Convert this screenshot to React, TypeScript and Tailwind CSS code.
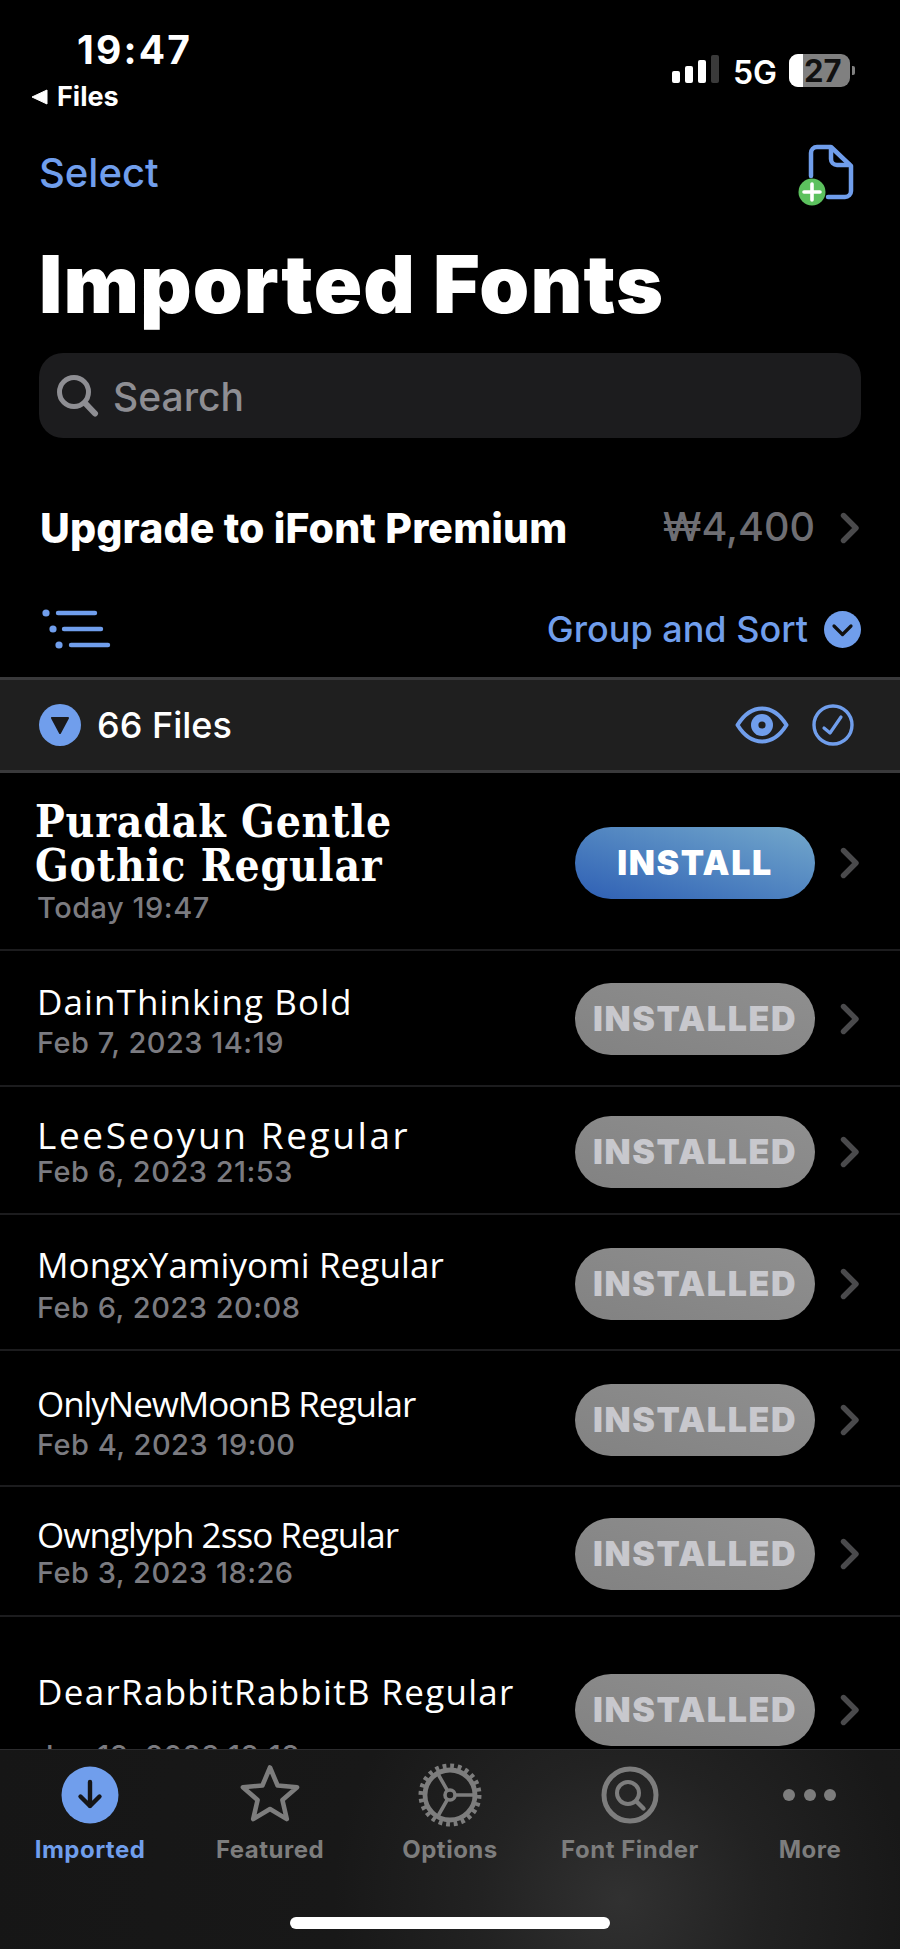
import React from 'react';

const BLUE = '#709eec';
const TAB_GREY = '#7d7d7d';

interface FontRow {
  title: string;
  date: string;
  rowClass: string;
  textClass: string;
  titleClass: string;
  dateClass: string;
  btnClass: string;
}

const rows: FontRow[] = [
  { title: 'DainThinking Bold', date: 'Feb 7, 2023 14:19', rowClass: 'h-[136px]', textClass: 'pt-[33px]', titleClass: 'text-[35px] tracking-[1.1px]', dateClass: 'mt-[9px]', btnClass: 'mt-[32px]' },
  { title: 'LeeSeoyun Regular', date: 'Feb 6, 2023 21:53', rowClass: 'h-[128px]', textClass: 'pt-[30px]', titleClass: 'text-[37px] tracking-[2.6px]', dateClass: 'mt-[5px]', btnClass: 'mt-[29px]' },
  { title: 'MongxYamiyomi Regular', date: 'Feb 6, 2023 20:08', rowClass: 'h-[136px]', textClass: 'pt-[32px]', titleClass: 'text-[35px] tracking-[0.1px]', dateClass: 'mt-[11px]', btnClass: 'mt-[33px]' },
  { title: 'OnlyNewMoonB Regular', date: 'Feb 4, 2023 19:00', rowClass: 'h-[136px]', textClass: 'pt-[35px]', titleClass: 'text-[35px] tracking-[-1.05px]', dateClass: 'mt-[9px]', btnClass: 'mt-[33px]' },
  { title: 'Ownglyph 2sso Regular', date: 'Feb 3, 2023 18:26', rowClass: 'h-[130px]', textClass: 'pt-[30px]', titleClass: 'text-[35px] tracking-[-0.95px]', dateClass: 'mt-[6px]', btnClass: 'mt-[31px]' },
  { title: 'DearRabbitRabbitB Regular', date: 'Jan 18, 2023 18:18', rowClass: 'h-[180px]', textClass: 'pt-[57px]', titleClass: 'text-[35px] tracking-[1.3px]', dateClass: 'mt-[32px]', btnClass: 'mt-[57px]' },
];

const Chevron = ({ color = '#4a4a4c' }: { color?: string }) => (
  <svg width="20" height="32" viewBox="0 0 20 32" fill="none">
    <polyline points="3.5,3.5 16,16 3.5,28.5" stroke={color} strokeWidth="5.4" strokeLinecap="round" strokeLinejoin="round" />
  </svg>
);

const StatusBar = () => (
  <div className="flex justify-between h-[130px]">
    <div className="pl-[30px] pt-[30px]">
      <div className="pl-[47px] text-[39px] leading-none font-bold tracking-[2.2px] text-white">19:47</div>
      <div className="mt-[14px] flex items-center gap-[9px] text-[27px] leading-none font-bold text-white">
        <svg width="18" height="16" viewBox="0 0 18 16"><path d="M17 1 V15 L2 8 Z" fill="#fff" stroke="#fff" strokeWidth="1" strokeLinejoin="round" /></svg>
        <span>Files</span>
      </div>
    </div>
    <div className="flex items-start pt-[54px] pr-[45px]">
      <div className="flex items-end gap-[5px] h-[31px] pb-[2px]">
        <div className="w-[8px] h-[12px] rounded-[2px] bg-white" />
        <div className="w-[8px] h-[17px] rounded-[2px] bg-white" />
        <div className="w-[8px] h-[23px] rounded-[2px] bg-white" />
        <div className="w-[8px] h-[28px] rounded-[2px] bg-[#3a3a3a]" />
      </div>
      <div className="ml-[14px] mt-[3px] text-[32px] leading-none font-semibold text-white">5G</div>
      <div className="ml-[12px] w-[61px] h-[33px] rounded-[9px] bg-[#808080] relative">
        <div className="absolute inset-y-0 left-0 w-[14px] rounded-l-[9px] bg-white" />
        <div className="absolute inset-0 pl-[15px] flex items-center text-[31px] leading-none font-bold text-[#111]">27</div>
      </div>
      <div className="ml-[2px] mt-[12px] w-[3px] h-[9px] rounded-r-[2px] bg-[#808080]" />
    </div>
  </div>
);

const AddFileIcon = () => (
  <svg className="mt-[4px]" width="60" height="70" viewBox="0 0 60 70" fill="none">
    <path d="M13 37 V14 a6 6 0 0 1 6-6 H33 L53 27 V52 a6 6 0 0 1-6 6 H30" stroke={BLUE} strokeWidth="4.5" strokeLinejoin="round" strokeLinecap="round" />
    <path d="M33 8 V20 a6 6 0 0 0 6 6 H53" stroke={BLUE} strokeWidth="4.5" strokeLinejoin="round" />
    <circle cx="14" cy="53" r="13.5" fill="#5cc15e" />
    <path d="M14 45 V61 M6 53 H22" stroke="#fff" strokeWidth="3.6" strokeLinecap="round" />
  </svg>
);

const SortIcon = () => (
  <svg width="80" height="44" viewBox="0 0 80 44">
    <g fill={BLUE}>
      <circle cx="6" cy="6" r="3.6" />
      <circle cx="13" cy="22" r="3.6" />
      <circle cx="19" cy="38" r="3.6" />
    </g>
    <g stroke={BLUE} strokeWidth="4.4" strokeLinecap="round">
      <line x1="18" y1="6" x2="55" y2="6" />
      <line x1="24" y1="22" x2="61" y2="22" />
      <line x1="31" y1="38" x2="68" y2="38" />
    </g>
  </svg>
);

const SectionHeader = () => (
  <div className="mt-[28px] h-[96px] border-y-[3px] border-[#39393b] bg-[#1f1f1f] flex items-center justify-between pl-[39px] pr-[46px]">
    <div className="flex items-center gap-[16px]">
      <svg width="42" height="42" viewBox="0 0 42 42">
        <circle cx="21" cy="21" r="21" fill={BLUE} />
        <path d="M13 14 H29 L21 29 Z" fill="#1a1a1c" stroke="#1a1a1c" strokeWidth="2" strokeLinejoin="round" />
      </svg>
      <span className="text-[36px] leading-none font-medium text-white">66 Files</span>
    </div>
    <div className="flex items-center gap-[23px]">
      <svg width="54" height="38" viewBox="0 0 54 38" fill="none">
        <path d="M2.5 19 C10 7 18 2.5 27 2.5 C36 2.5 44 7 51.5 19 C44 31 36 35.5 27 35.5 C18 35.5 10 31 2.5 19 Z" stroke={BLUE} strokeWidth="4" strokeLinejoin="round" />
        <circle cx="27" cy="19" r="11" fill={BLUE} />
        <circle cx="27" cy="19" r="3.6" fill="#1f1f1f" />
      </svg>
      <svg width="42" height="42" viewBox="0 0 42 42" fill="none">
        <circle cx="21" cy="21" r="19" stroke={BLUE} strokeWidth="3.4" />
        <polyline points="12,24 18,29 29,13" stroke={BLUE} strokeWidth="3.2" strokeLinecap="round" strokeLinejoin="round" />
      </svg>
    </div>
  </div>
);

const InstallButton = ({ installed }: { installed: boolean }) =>
  installed ? (
    <div className="w-[240px] h-[72px] rounded-[36px] bg-gradient-to-tr from-[#828282] to-[#8f8f8f] flex items-center justify-center text-[34px] leading-none font-black tracking-[1.6px] text-[#c8c8cd]">
      INSTALLED
    </div>
  ) : (
    <div className="w-[240px] h-[72px] rounded-[36px] bg-gradient-to-tr from-[#2f5fb4] to-[#74a8cb] flex items-center justify-center text-[34px] leading-none font-black tracking-[1.6px] text-white">
      INSTALL
    </div>
  );

const FontListRow = ({ row }: { row: FontRow }) => (
  <div className={`flex justify-between pl-[37px] pr-[40px] border-b-2 border-[#1c1c1e] box-border ${row.rowClass}`}>
    <div className={row.textClass}>
      <div className={`font-['Open_Sans',sans-serif] leading-[36px] text-white whitespace-nowrap ${row.titleClass}`}>{row.title}</div>
      <div className={`text-[29px] leading-[28px] font-medium tracking-[0.5px] text-[#7b7b80] ${row.dateClass}`}>{row.date}</div>
    </div>
    <div className={`flex items-center gap-[25px] self-start ${row.btnClass}`}>
      <InstallButton installed />
      <Chevron />
    </div>
  </div>
);

const starPoints = Array.from({ length: 10 }, (_, i) => {
  const r = i % 2 === 0 ? 28.5 : 13;
  const a = (-90 + i * 36) * (Math.PI / 180);
  return `${(32 + r * Math.cos(a)).toFixed(1)},${(33 + r * Math.sin(a)).toFixed(1)}`;
}).join(' ');

const GearIcon = () => (
  <svg width="64" height="64" viewBox="0 0 64 64" fill="none" stroke={TAB_GREY}>
    <circle cx="32" cy="32" r="28.5" strokeWidth="6" strokeDasharray="3.73 3.73" />
    <circle cx="32" cy="32" r="25" strokeWidth="4.8" />
    <circle cx="32" cy="32" r="5" strokeWidth="3.6" />
    <path d="M37 32 H56 M29.5 27.7 L20 11 M29.5 36.3 L20 53" strokeWidth="3.6" />
  </svg>
);

const tabs = [
  {
    label: 'Imported',
    active: true,
    icon: (
      <svg width="58" height="58" viewBox="0 0 58 58" fill="none">
        <circle cx="29" cy="29" r="28.5" fill={BLUE} />
        <path d="M29 16 V40 M19.5 30.5 L29 40 L38.5 30.5" stroke="#151517" strokeWidth="4.4" strokeLinecap="round" strokeLinejoin="round" />
      </svg>
    ),
  },
  {
    label: 'Featured',
    active: false,
    icon: (
      <svg width="64" height="64" viewBox="0 0 64 64" fill="none">
        <polygon points={starPoints} stroke={TAB_GREY} strokeWidth="4.6" strokeLinejoin="round" />
      </svg>
    ),
  },
  { label: 'Options', active: false, icon: <GearIcon /> },
  {
    label: 'Font Finder',
    active: false,
    icon: (
      <svg width="58" height="58" viewBox="0 0 58 58" fill="none" stroke={TAB_GREY}>
        <circle cx="29" cy="29" r="26" strokeWidth="5" />
        <circle cx="27" cy="27" r="11" strokeWidth="4" />
        <path d="M35 35 L42.5 42.5" strokeWidth="4.4" strokeLinecap="round" />
      </svg>
    ),
  },
  {
    label: 'More',
    active: false,
    icon: (
      <svg width="58" height="14" viewBox="0 0 58 14" fill={TAB_GREY}>
        <circle cx="8" cy="7" r="6" />
        <circle cx="29" cy="7" r="6" />
        <circle cx="49" cy="7" r="6" />
      </svg>
    ),
  },
];

const TabBar = () => (
  <div className="shrink-0 h-[200px] border-t border-[#2c2c2e] bg-[radial-gradient(circle_at_69%_75%,#313131_0%,#222222_22%,#181818_45%,#161616_100%)]">
    <div className="grid grid-cols-5 pt-[13px]">
      {tabs.map((tab) => (
        <div key={tab.label} className="flex flex-col items-center">
          <div className="h-[64px] flex items-center justify-center">{tab.icon}</div>
          <div className={`mt-[11px] text-[24px] leading-none font-bold tracking-[0.5px] ${tab.active ? 'text-[#709eec]' : 'text-[#7d7d7d]'}`}>{tab.label}</div>
        </div>
      ))}
    </div>
    <div className="mt-[55px] mx-auto w-[320px] h-[12px] rounded-full bg-white" />
  </div>
);

export default function App() {
  return (
    <div className="w-[900px] h-[1949px] bg-black overflow-hidden flex flex-col font-['Inter',sans-serif]">
      <div className="flex-1 min-h-0 overflow-hidden">
        <StatusBar />
        <div className="flex items-center justify-between h-[84px] pl-[39px] pr-[42px]">
          <span className="mt-[2px] text-[40px] leading-none font-medium text-[#709eec]">Select</span>
          <AddFileIcon />
        </div>
        <h1 className="mt-[30px] ml-[39px] text-[80px] leading-none font-black tracking-[1.1px] text-white">Imported Fonts</h1>
        <div className="mt-[29px] mx-[39px] h-[85px] rounded-[24px] bg-[#1c1c1e] flex items-center pl-[18px] gap-[14px]">
          <svg width="42" height="42" viewBox="0 0 42 42" fill="none" stroke="#8e8e93">
            <circle cx="17" cy="17" r="14.5" strokeWidth="5" />
            <path d="M28 28 L38 38.5" strokeWidth="6" strokeLinecap="round" />
          </svg>
          <span className="mt-[1px] text-[39px] leading-none font-medium text-[#8e8e93]">Search</span>
        </div>
        <div className="mt-[70px] h-[40px] flex items-center justify-between pl-[40px] pr-[40px]">
          <span className="text-[41px] leading-none font-extrabold tracking-[0.15px] text-white">Upgrade to iFont Premium</span>
          <div className="flex items-center gap-[25px]">
            <span className="text-[39.5px] leading-none font-medium text-[#6e6e73]">₩4,400</span>
            <Chevron />
          </div>
        </div>
        <div className="mt-[61px] h-[40px] flex items-center justify-between pl-[40px] pr-[39px]">
          <SortIcon />
          <div className="flex items-center gap-[16px]">
            <span className="text-[36px] leading-none font-medium text-[#709eec]">Group and Sort</span>
            <svg width="37" height="37" viewBox="0 0 37 37" fill="none">
              <circle cx="18.5" cy="18.5" r="18.5" fill={BLUE} />
              <polyline points="10,15 18.5,23.5 27,15" stroke="#111" strokeWidth="3.2" strokeLinecap="round" strokeLinejoin="round" />
            </svg>
          </div>
        </div>
        <SectionHeader />
        <div className="flex justify-between h-[178px] pl-[37px] pr-[40px] border-b-2 border-[#1c1c1e] box-border">
          <div className="pt-[27px]">
            <div className="-ml-[2px] font-['DejaVu_Serif',serif] [font-stretch:condensed] text-[44px] leading-[44px] font-bold tracking-[0.8px] text-white">
              Puradak Gentle<br />Gothic Regular
            </div>
            <div className="mt-[6px] text-[29px] leading-[28px] font-medium tracking-[0.5px] text-[#7b7b80]">Today 19:47</div>
          </div>
          <div className="flex items-center gap-[25px] self-start mt-[54px]">
            <InstallButton installed={false} />
            <Chevron />
          </div>
        </div>
        {rows.map((row) => (
          <FontListRow key={row.title} row={row} />
        ))}
      </div>
      <TabBar />
    </div>
  );
}
